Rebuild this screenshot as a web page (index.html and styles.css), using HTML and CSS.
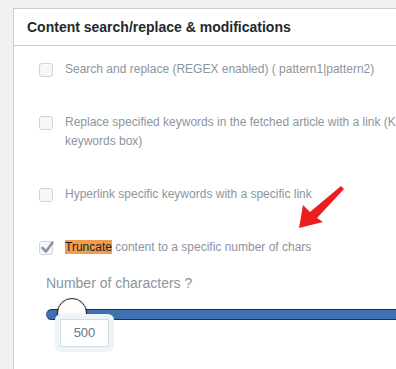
FILE: index.html
```html
<!DOCTYPE html>
<html lang="en">
<head>
    <meta charset="UTF-8">
    <title>Content search/replace &amp; modifications</title>
    <link rel="stylesheet" href="styles.css">
</head>
<body>
    <div class="postbox">
        <h2 class="postbox-title">Content search/replace &amp; modifications</h2>

        <div class="inside">
            <label class="option">
                <span class="check"></span>
                <span class="option-text">Search and replace (REGEX enabled) ( pattern1|pattern2)</span>
            </label>

            <label class="option">
                <span class="check"></span>
                <span class="option-text">Replace specified keywords in the fetched article with a link (Keyword|link from the<br>keywords box)</span>
            </label>

            <label class="option">
                <span class="check"></span>
                <span class="option-text">Hyperlink specific keywords with a specific link</span>
            </label>

            <label class="option">
                <span class="check checked">
                    <svg width="13" height="12" viewBox="0 0 13 12">
                        <path d="M1.5 7 L5 10.5 L11.5 1.5" fill="none" stroke="#8d969e" stroke-width="2.6" stroke-linecap="round" stroke-linejoin="round"/>
                    </svg>
                </span>
                <span class="option-text"><mark>Truncate</mark> content to a specific number of chars</span>
            </label>

            <div class="slider-field">
                <div class="slider-label">Number of characters ?</div>
                <div class="slider">
                    <div class="track"></div>
                    <div class="handle"></div>
                    <div class="value-box">
                        <div class="value">500</div>
                    </div>
                </div>
            </div>
        </div>

        <!-- flecha roja -->
        <svg class="arrow" width="56" height="52" viewBox="0 0 56 52">
            <polygon points="7,46 11,23 18,30 49,4 52,7 25,36 31,40" fill="#ec1c1f"/>
        </svg>
    </div>
</body>
</html>
```

FILE: styles.css
```css
html, body {
    overflow: hidden;
}

body {
    margin: 0;
    padding: 8px 0 0 13px;
    background-color: #f1f1f1;
    font-family: "Liberation Sans", Arial, sans-serif;
    height: 361px;
}

.postbox {
    position: relative;
    width: 600px;
    height: 400px;
    background-color: #ffffff;
    border: 1px solid #c9cdd1;
}

.postbox-title {
    margin: 0;
    padding: 0 13px;
    height: 36px;
    line-height: 36px;
    font-size: 14px;
    font-weight: bold;
    color: #23282d;
    border-bottom: 1px solid #c9cdd1;
}

.inside {
    padding: 14px 0 0 25px;
}

.option {
    display: flex;
    align-items: flex-start;
    gap: 12px;
    margin-bottom: 34px;
    font-size: 12px;
    line-height: 19px;
    color: #8b959d;
}

.option-text {
    white-space: nowrap;
}

.check {
    flex: none;
    width: 12px;
    height: 12px;
    margin-top: 3px;
    border: 1px solid #cdd5db;
    border-radius: 3px;
    background-color: #f5f8fa;
    display: flex;
    align-items: center;
    justify-content: center;
}

.check.checked svg {
    margin: -3px -2px 0 0;
}

mark {
    background-color: #f29d4d;
    color: #1d1d1d;
    padding: 0;
}

.slider-field {
    margin-top: -18px;
    padding-left: 7px;
}

.slider-label {
    font-size: 14px;
    line-height: 20px;
    color: #8a959d;
}

.slider {
    position: relative;
    height: 60px;
    margin-top: 5px;
}

.track {
    position: absolute;
    top: 11px;
    left: 0;
    right: 0;
    height: 9px;
    background-color: #3f70b1;
    border: 1px solid #2c2f33;
    border-left-color: #3f70b1;
    border-radius: 6px 0 0 6px;
}

.handle {
    position: absolute;
    top: 0;
    left: 11px;
    width: 28px;
    height: 28px;
    border-radius: 50%;
    border: 1px solid #222;
    background: linear-gradient(#ffffff 40%, #dcdfe6);
    box-shadow: 0 1px 3px rgba(0, 0, 0, 0.35);
}

.value-box {
    position: absolute;
    top: 16px;
    left: 9px;
    padding: 5px;
    background-color: #eef3f7;
    border-radius: 6px;
}

.value {
    width: 47px;
    height: 26px;
    line-height: 26px;
    text-align: center;
    font-size: 13px;
    color: #6c7781;
    background-color: #ffffff;
    border: 1px solid #d3dde2;
}

.arrow {
    position: absolute;
    left: 278px;
    top: 173px;
}
```
